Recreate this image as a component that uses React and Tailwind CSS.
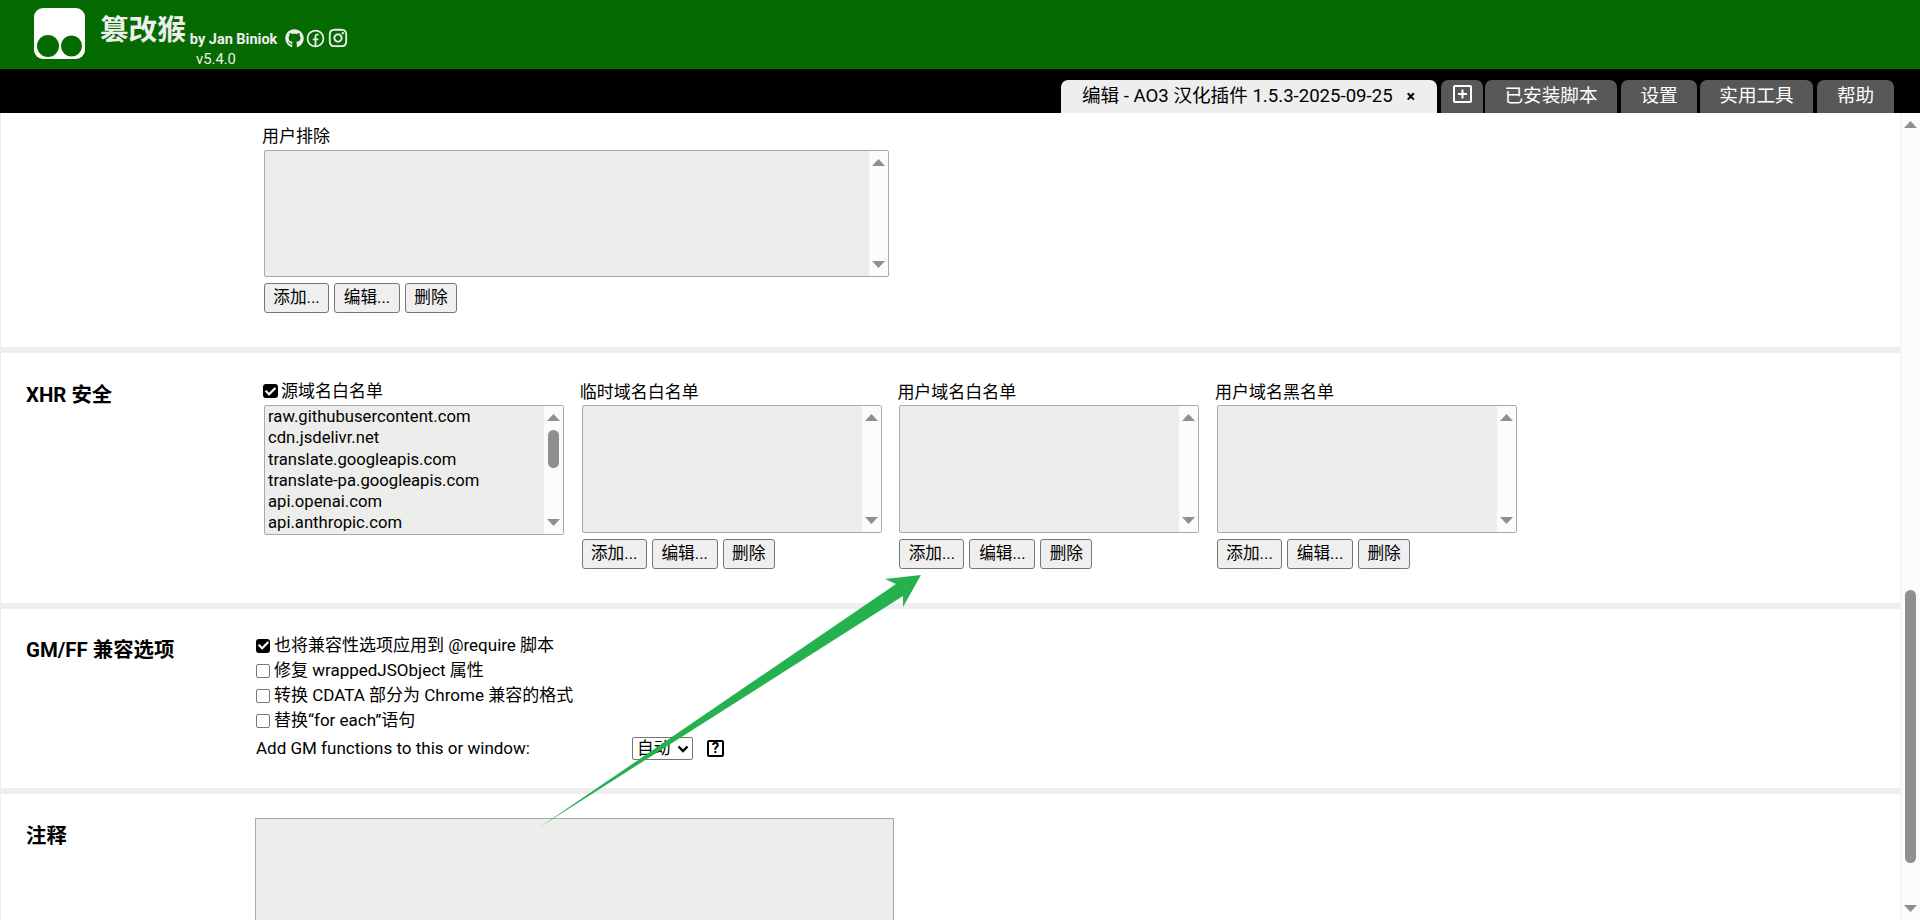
import React from "react";
import { RiFacebookCircleLine, RiInstagramLine } from "react-icons/ri";
import { FaGithub, FaCheck } from "react-icons/fa";

function Track({ thumb }) {
  return (
    <div className="relative w-[19px] shrink-0 self-stretch bg-[#fbfbfb]">
      <svg className="absolute top-[8px] left-[3px]" width="13" height="7" viewBox="0 0 13 7"><path d="M6.5 0L13 7H0z" fill="#8f8f8f" /></svg>
      <svg className="absolute bottom-[8px] left-[3px]" width="13" height="7" viewBox="0 0 13 7"><path d="M0 0h13L6.5 7z" fill="#8f8f8f" /></svg>
      {thumb && <div className="absolute top-[24px] left-[4px] h-[38px] w-[11px] rounded-full bg-[#8f8f8f]" />}
    </div>
  );
}

function ListBox({ items, h = "h-[128px]", w = "w-[300px]", thumb }) {
  return (
    <div className={`flex ${h} ${w} overflow-hidden rounded-[2px] border border-[#a9a9a9] bg-[#ededec]`}>
      <div className="min-w-0 flex-1 pl-[3px] text-[16.67px] leading-[21.3px] text-black">
        {items && items.map((t) => <div key={t}>{t}</div>)}
      </div>
      <Track thumb={thumb} />
    </div>
  );
}

function Btn({ children, w }) {
  return (
    <button className={`h-[30px] ${w} rounded-[3px] border border-[#767676] bg-[#efefef] text-center text-[16.67px] leading-[28px] text-black`}>
      {children}
    </button>
  );
}

function Btns() {
  return (
    <div className="mt-[6px] flex gap-[5px]">
      <Btn w="w-[65px]">添加...</Btn>
      <Btn w="w-[66px]">编辑...</Btn>
      <Btn w="w-[52px]">删除</Btn>
    </div>
  );
}

function Box({ checked, wide }) {
  return checked ? (
    <span className={`flex h-[14px] ${wide ? "w-[15px]" : "w-[14px]"} shrink-0 items-center justify-center rounded-[3px] bg-black text-white`}>
      <FaCheck size={11} />
    </span>
  ) : (
    <span className="h-[14px] w-[14px] shrink-0 rounded-[2px] border border-[#767676] bg-white" />
  );
}

function Opt({ checked, children }) {
  return (
    <div className="flex h-[25px] items-center gap-[4px] text-[17px] leading-[25px] text-black">
      <Box checked={checked} />
      <span>{children}</span>
    </div>
  );
}

function Col({ title }) {
  return (
    <div className="w-[300px]">
      <div className="-ml-[2px] mb-px h-[24px] text-[17px] leading-[24px] text-black">{title}</div>
      <ListBox />
      <Btns />
    </div>
  );
}

function Tab({ children, className }) {
  return (
    <div className={`flex h-[33px] items-center justify-center rounded-t-[7px] bg-[#585858] text-[18.6px] leading-[33px] text-white ${className}`}>
      {children}
    </div>
  );
}

export default function App() {
  return (
    <div className="flex h-[920px] w-[1920px] flex-col overflow-hidden bg-[#eeeeee] font-['Roboto','Noto_Sans_CJK_SC',sans-serif]">
      {/* Header */}
      <header className="flex h-[69px] shrink-0 items-start bg-[#056a00] pl-[34px] pt-[8px] text-[#eeeeee]">
        <svg width="51" height="51" viewBox="0 0 51 51" className="shrink-0">
          <rect width="51" height="51" rx="9" fill="#fff" />
          <circle cx="14" cy="38" r="11" fill="#056a00" />
          <circle cx="37.5" cy="38" r="10.5" fill="#056a00" />
        </svg>
        <div className="ml-[15px] flex flex-col">
          <div className="flex h-[44px] items-end">
            <span className="text-[28.6px] font-bold leading-[44px]">篡改猴</span>
            <span className="mb-[3px] ml-[4px] text-[14.5px] font-bold leading-[18px]">by Jan Biniok</span>
            <span className="mb-[3px] ml-[8px] flex items-center gap-[1px]">
              <FaGithub size={19} />
              <RiFacebookCircleLine size={21} />
              <RiInstagramLine size={22} />
            </span>
          </div>
          <div className="ml-[96px] text-[14.8px] leading-[15px]">v5.4.0</div>
        </div>
      </header>

      {/* Tab strip */}
      <div className="flex h-[44px] shrink-0 items-end justify-end bg-black pr-[26px]">
        <div className="flex h-[33px] w-[376px] items-center rounded-t-[7px] bg-[#eeeeee] pl-[21px] text-[18.6px] leading-[33px] text-black">
          <span>编辑 - AO3 汉化插件 1.5.3-2025-09-25</span>
          <span className="ml-[14px] text-[16px] font-bold">×</span>
        </div>
        <div className="ml-[4px] flex h-[33px] w-[42px] items-start justify-center rounded-t-[7px] bg-[#585858] pt-[5px]">
          <svg width="19" height="18" viewBox="0 0 19 18" fill="none" stroke="#fff" strokeWidth="2">
            <rect x="1" y="1" width="17" height="16" rx="1" />
            <path d="M9.5 4.5v9M5 9h9" />
          </svg>
        </div>
        <Tab className="ml-[2px] w-[132px]">已安装脚本</Tab>
        <Tab className="ml-[4px] w-[76px]">设置</Tab>
        <Tab className="ml-[3px] w-[113px]">实用工具</Tab>
        <Tab className="ml-[4px] w-[77px]">帮助</Tab>
      </div>

      {/* Body */}
      <div className="flex min-h-0 flex-1">
        <main className="flex min-w-0 flex-1 flex-col gap-[6px] px-px">
          {/* user excludes */}
          <section className="flex h-[234px] shrink-0 bg-white pl-[263px] pt-[12px]">
            <div>
              <div className="-ml-[2px] mb-px h-[24px] text-[17px] leading-[22px] text-black">用户排除</div>
              <ListBox w="w-[625px]" h="h-[127px]" />
              <Btns />
            </div>
          </section>

          {/* XHR */}
          <section className="flex h-[250px] shrink-0 bg-white pt-[27px]">
            <h2 className="ml-[25px] w-[238px] shrink-0 text-[20.4px] font-bold leading-[30px] text-black">XHR 安全</h2>
            <div className="flex gap-[17.7px]">
              <div className="w-[300px]">
                <div className="-ml-px mb-[3px] flex h-[22px] items-center gap-[3px] text-[17px] leading-[22px] text-black">
                  <Box checked wide />
                  <span>源域名白名单</span>
                </div>
                <ListBox
                  h="h-[130px]"
                  thumb
                  items={[
                    "raw.githubusercontent.com",
                    "cdn.jsdelivr.net",
                    "translate.googleapis.com",
                    "translate-pa.googleapis.com",
                    "api.openai.com",
                    "api.anthropic.com",
                  ]}
                />
              </div>
              <Col title="临时域名白名单" />
              <Col title="用户域名白名单" />
              <Col title="用户域名黑名单" />
            </div>
          </section>

          {/* GM/FF */}
          <section className="flex h-[179px] shrink-0 bg-white pt-[24px]">
            <h2 className="ml-[25px] mt-[2px] w-[230px] shrink-0 text-[20.4px] font-bold leading-[30px] text-black">GM/FF 兼容选项</h2>
            <div>
              <Opt checked>也将兼容性选项应用到 @require 脚本</Opt>
              <Opt>修复 wrappedJSObject 属性</Opt>
              <Opt>转换 CDATA 部分为 Chrome 兼容的格式</Opt>
              <Opt>替换“for each”语句</Opt>
              <div className="mt-[3px] flex h-[25px] items-center text-[17px] text-black">
                <span className="w-[376px]">Add GM functions to this or window:</span>
                <span className="flex h-[23px] w-[61px] items-center justify-between rounded-[2px] border border-[#767676] bg-white pl-[4px] pr-[3px] text-[16.67px] leading-[21px]">
                  自动
                  <svg width="12" height="8" viewBox="0 0 12 8" fill="none" stroke="#000" strokeWidth="2.4"><path d="M1.5 1.5L6 6l4.5-4.5" /></svg>
                </span>
                <span className="ml-[14px] flex h-[17px] w-[17px] items-center justify-center rounded-[2px] border-2 border-black text-[15px] font-bold leading-[13px]">?</span>
              </div>
            </div>
          </section>

          {/* comment */}
          <section className="flex min-h-0 flex-1 overflow-hidden bg-white pt-[24px]">
            <h2 className="ml-[25px] mt-[3px] w-[229px] shrink-0 text-[20.4px] font-bold leading-[30px] text-black">注释</h2>
            <div className="h-[200px] w-[639px] shrink-0 border border-[#a9a9a9] bg-[#ededec]" />
          </section>
        </main>

        {/* page scrollbar */}
        <aside className="relative w-[19px] shrink-0 bg-[#fbfbfb]">
          <svg className="absolute left-[3px] top-[8px]" width="13" height="7" viewBox="0 0 13 7"><path d="M6.5 0L13 7H0z" fill="#8f8f8f" /></svg>
          <svg className="absolute bottom-[8px] left-[3px]" width="13" height="7" viewBox="0 0 13 7"><path d="M0 0h13L6.5 7z" fill="#8f8f8f" /></svg>
          <div className="absolute left-[4px] top-[477px] h-[273px] w-[11px] rounded-full bg-[#8f8f8f]" />
        </aside>
      </div>

      {/* annotation arrow lying over the page */}
      <svg className="pointer-events-none absolute left-0 top-0" width="1920" height="920" viewBox="0 0 1920 920">
        <path d="M921 575L885 579L896 584L540 827L903 596L903 607Z" fill="#26b14f" />
      </svg>
    </div>
  );
}
